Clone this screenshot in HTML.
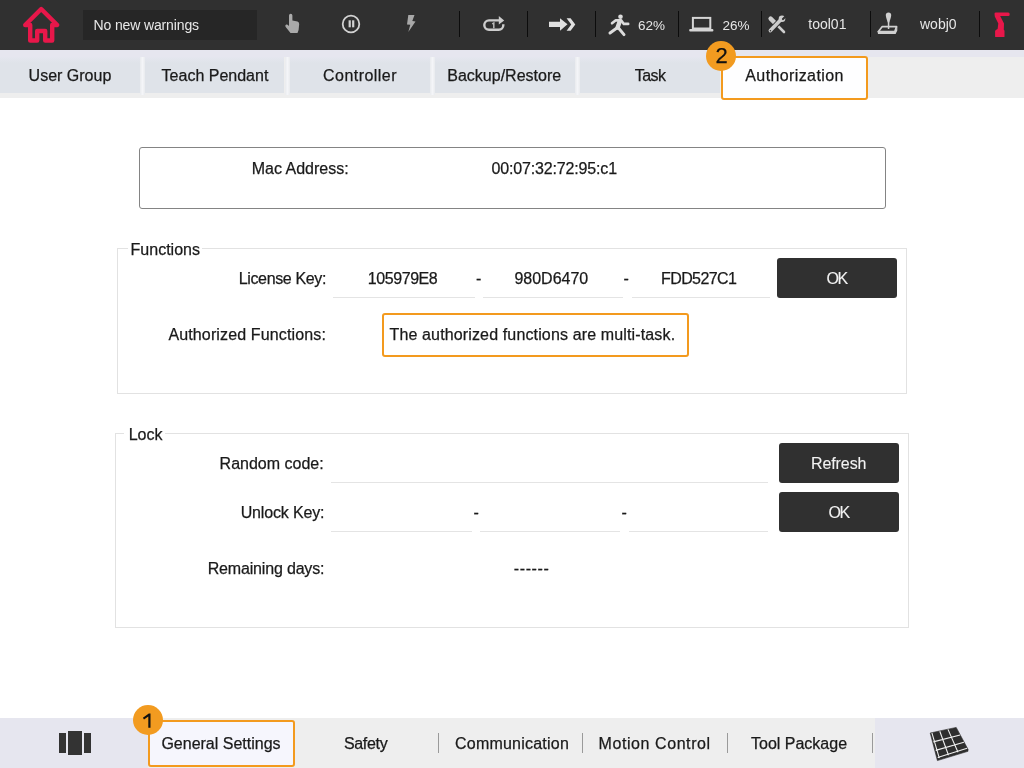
<!DOCTYPE html>
<html><head><meta charset="utf-8">
<style>
*{margin:0;padding:0;box-sizing:border-box}
html,body{width:1024px;height:768px;overflow:hidden;background:#fff;font-family:"Liberation Sans",sans-serif;color:#1a1a1a}
body{will-change:transform}
.a{position:absolute}
.t{position:absolute;line-height:1;white-space:nowrap;font-size:16px;-webkit-text-stroke:0.25px currentColor}
#top{left:0;top:0;width:1024px;height:50px;background:#303030}
.sep{position:absolute;top:11.3px;width:1.5px;height:26px;background:#0c0c0c}
.wt{color:#e6e6e6;-webkit-text-stroke:0}
#tabs{left:0;top:50px;width:1024px;height:48px;background:#eeeeee}
#tabs .band{position:absolute;left:0;top:0;width:1024px;height:7px;background:#e6e6ef}
.tab{position:absolute;top:7px;height:36px;width:140px;background:linear-gradient(#e5e6ef,#dfe3e9 6px)}
.tabsep{position:absolute;top:7px;height:38px;width:5px;background:linear-gradient(90deg,#e9ebee,#f4f5f8 50%,#e9ebee)}
.box{position:absolute;border:1px solid #848484;border-radius:3px}
.grp{position:absolute;border:1px solid #e2e2e2}
.line{position:absolute;height:1px;background:#e4e4e4}
.btn{position:absolute;background:#303030;border-radius:3px}
.bt{color:#f2f2f2;-webkit-text-stroke:0.1px currentColor}
.orange{position:absolute;border:2px solid #f39a1e;border-radius:3px}
.badge{position:absolute;width:30px;height:30px;border-radius:50%;background:#f29b20}
#bot{left:0;top:718px;width:1024px;height:50px;background:#eeeeee}
.bsep{position:absolute;top:733px;width:1px;height:20px;background:#9a9a9a}
</style></head><body>

<!-- TOP BAR -->
<div id="top" class="a"></div>
<svg class="a" style="left:0;top:0" width="1024" height="50" viewBox="0 0 1024 50">
  <!-- home -->
  <path d="M25.2 25 L41.2 9 L57.2 25 L52.2 25 L52.2 40.5 L45.2 40.5 L45.2 31 L37.2 31 L37.2 40.5 L30.2 40.5 L30.2 25 Z" fill="none" stroke="#e8174a" stroke-width="4.4" stroke-linejoin="round"/>
  <!-- warning box -->
  <rect x="83" y="10" width="174" height="30" fill="#262626"/>
  <!-- hand -->
  <path d="M289 15.5 a1.7 1.7 0 0 1 3.4 0 V20.5 L297.5 21.5 Q299.3 22 299.2 24 L298.6 30 L297.5 33 H290.5 L285.5 26.8 Q284.8 25 286.3 24.6 Q287.3 24.4 289 26 Z" fill="#aaaaaa"/>
  <!-- pause -->
  <circle cx="351" cy="24" r="8.3" fill="none" stroke="#d2d2d2" stroke-width="1.8"/>
  <rect x="348.6" y="20.3" width="2.2" height="7" fill="#d2d2d2"/>
  <rect x="352.1" y="20.3" width="2.2" height="7" fill="#d2d2d2"/>
  <!-- lightning -->
  <path d="M408.3 15 L414.5 15 L412.3 21 L415.5 21.5 L408.3 32 L410.3 24.8 L407 24.5 Z" fill="#a8a8a8"/>
  <!-- repeat one -->
  <path d="M500 20.4 H489 A4.7 4.7 0 0 0 489 29.8 H498.8 A4.6 4.6 0 0 0 503.3 25.3 V24.2" fill="none" stroke="#cdcdcd" stroke-width="2.4"/>
  <path d="M498.8 16 L504.2 20.6 L498.8 24.4 Z" fill="#cdcdcd"/>
  <path d="M492.2 23.9 L493.8 23 V28.2" fill="none" stroke="#bcbcbc" stroke-width="1.5"/>
  <!-- double arrow -->
  <path d="M549 21.7 H560 V18.2 L567.5 24.3 L560 30.8 V27 H549 Z" fill="#e0e0e0"/>
  <path d="M566.6 18.2 L570.6 18.2 L575.3 24.4 L570.6 30.8 L566.6 30.8 L571.2 24.4 Z" fill="#e0e0e0"/>
  <!-- walker -->
  <circle cx="620.5" cy="16.8" r="2.3" fill="#dcdcdc"/>
  <g fill="none" stroke="#dcdcdc" stroke-linecap="round" stroke-linejoin="round">
  <path d="M612 23.3 L615.8 20.2 L621.3 20.4 L623.8 23.9 L628.2 23.9" stroke-width="2.6"/>
  <path d="M619.8 21.3 L617.6 27.6" stroke-width="4.4"/>
  <path d="M617.2 27.8 L610 33" stroke-width="3"/>
  <path d="M618.3 27.8 L624 34.6" stroke-width="3"/></g>
  <!-- laptop -->
  <rect x="692.9" y="17.9" width="17.4" height="10.6" fill="none" stroke="#d5d5d5" stroke-width="2"/>
  <rect x="689.2" y="29" width="24.2" height="2.4" rx="1" fill="#d5d5d5"/>
  <!-- tools -->
  <path d="M770.6 18.6 L774.6 22.6" stroke="#cdcdcd" stroke-width="4.4" stroke-linecap="round"/>
  <path d="M775 23 L784 32" stroke="#cdcdcd" stroke-width="2.6" stroke-linecap="round"/>
  <path d="M781 19.6 L770.4 30.6" stroke="#303030" stroke-width="5.4" stroke-linecap="round"/>
  <circle cx="782" cy="18.7" r="4.3" fill="#303030"/>
  <path d="M781 19.6 L770.4 30.6" stroke="#cdcdcd" stroke-width="3.6" stroke-linecap="round"/>
  <circle cx="782" cy="18.7" r="3.3" fill="#cdcdcd"/>
  <path d="M783 19 L786.5 15.5" stroke="#303030" stroke-width="2.2" stroke-linecap="round"/>
  <circle cx="770.4" cy="30.7" r="0.8" fill="#303030"/>
  <!-- joystick -->
  <path d="M885.8 15 Q885.8 12.4 888.5 12.4 Q891.2 12.4 891.2 15 Q891.2 17 889.2 22.5 H887.8 Q885.8 17 885.8 15 Z" fill="#d0d0d0"/>
  <rect x="887.8" y="21" width="1.5" height="8" fill="#d0d0d0"/>
  <path d="M882.3 26.6 L896.6 26.6 L894.8 31.6 L878.4 31.6 Z" fill="none" stroke="#d0d0d0" stroke-width="1.7" stroke-linejoin="round"/>
  <path d="M877.5 31 L895.5 31 L897.3 27 L897.3 30.5 L895.6 34 L878 34 Z" fill="#d0d0d0"/>
  <!-- robot arm -->
  <path d="M994.5 13.8 Q994.5 12.4 995.9 12.4 L1008.3 12.4 Q1009.7 12.4 1009.7 14.25 Q1009.7 16.1 1008.3 16.1 L1000.2 16.1 L1004 23.6 L1003.8 29.8 Q1004.5 30.2 1004.5 31 L1004.5 36.4 Q1004.5 37.1 1003.8 37.1 L995.8 37.1 Q995.1 37.1 995.1 36.4 L995.1 31 Q995.3 29.6 997.6 28.9 L998.3 23.4 L994.8 16.6 Z" fill="#e8174a"/>
</svg>
<div class="t wt" style="left:93.5px;top:18px;font-size:14px;color:#e8e8e8;letter-spacing:-0.13px">No new warnings</div>
<div class="sep" style="left:458.8px"></div>
<div class="sep" style="left:526.6px"></div>
<div class="sep" style="left:594.7px"></div>
<div class="sep" style="left:677.8px"></div>
<div class="sep" style="left:760.8px"></div>
<div class="sep" style="left:869.7px"></div>
<div class="sep" style="left:978.9px"></div>
<div class="t wt" style="left:638px;top:18.6px;font-size:13.5px">62%</div>
<div class="t wt" style="left:722.6px;top:18.6px;font-size:13.5px">26%</div>
<div class="t wt" style="left:808.3px;top:17.2px;font-size:14px">tool01</div>
<div class="t wt" style="left:920px;top:17.2px;font-size:14px">wobj0</div>

<!-- TABS -->
<div id="tabs" class="a"><div class="band"></div>
  <div class="tab" style="left:0"></div>
  <div class="tab" style="left:145px;width:139px"></div>
  <div class="tab" style="left:290px"></div>
  <div class="tab" style="left:435px"></div>
  <div class="tab" style="left:580px"></div>
  <div class="tabsep" style="left:140px"></div>
  <div class="tabsep" style="left:284.5px"></div>
  <div class="tabsep" style="left:430px"></div>
  <div class="tabsep" style="left:575px"></div>
</div>
<div class="t" style="left:28.6px;top:68.2px">User Group</div>
<div class="t" style="left:161.6px;top:68.2px">Teach Pendant</div>
<div class="t" style="left:323.1px;top:68.2px;letter-spacing:0.45px">Controller</div>
<div class="t" style="left:447.3px;top:68.2px">Backup/Restore</div>
<div class="t" style="left:634.7px;top:68.2px;letter-spacing:-0.5px">Task</div>
<div class="orange" style="left:721px;top:56px;width:147px;height:44px;background:#fefeff"></div>
<div class="t" style="left:745.3px;top:68.2px;letter-spacing:0.39px">Authorization</div>
<div class="badge" style="left:706px;top:41px"></div>
<div class="t" style="left:715.5px;top:45px;font-size:22px;color:#111">2</div>

<!-- MAC -->
<div class="box" style="left:139px;top:147px;width:747px;height:62px"></div>
<div class="t" style="left:251.7px;top:161.2px">Mac Address:</div>
<div class="t" style="left:491.4px;top:161.2px;letter-spacing:-0.15px">00:07:32:72:95:c1</div>

<!-- FUNCTIONS -->
<div class="grp" style="left:117px;top:248px;width:790px;height:146px"></div>
<div class="a" style="left:128px;top:240px;width:74px;height:14px;background:#fff"></div>
<div class="t" style="left:130.6px;top:242.2px">Functions</div>
<div class="t" style="left:238.7px;top:270.5px;letter-spacing:-0.35px">License Key:</div>
<div class="line" style="left:333px;top:297px;width:142px"></div>
<div class="line" style="left:482.5px;top:297px;width:140px"></div>
<div class="line" style="left:632px;top:297px;width:138px"></div>
<div class="t" style="left:367.8px;top:270.5px;letter-spacing:-0.43px">105979E8</div>
<div class="t" style="left:476px;top:270.5px">-</div>
<div class="t" style="left:514.4px;top:270.5px">980D6470</div>
<div class="t" style="left:623.5px;top:270.5px">-</div>
<div class="t" style="left:661px;top:270.5px;letter-spacing:-0.6px">FDD527C1</div>
<div class="btn" style="left:777px;top:258px;width:120px;height:40px"></div>
<div class="t bt" style="left:826.5px;top:270.5px;letter-spacing:-1.4px">OK</div>
<div class="t" style="left:168.4px;top:327.2px;letter-spacing:0.14px">Authorized Functions:</div>
<div class="orange" style="left:382px;top:313px;width:307px;height:44px"></div>
<div class="t" style="left:389.5px;top:327.2px;letter-spacing:0.14px">The authorized functions are multi-task.</div>

<!-- LOCK -->
<div class="grp" style="left:115px;top:433px;width:794px;height:195px"></div>
<div class="a" style="left:124px;top:425px;width:41px;height:14px;background:#fff"></div>
<div class="t" style="left:128.7px;top:426.5px">Lock</div>
<div class="t" style="left:219.6px;top:455.5px">Random code:</div>
<div class="line" style="left:331px;top:482px;width:437px"></div>
<div class="btn" style="left:779px;top:443px;width:120px;height:40px"></div>
<div class="t bt" style="left:811px;top:455.5px;letter-spacing:-0.1px">Refresh</div>
<div class="t" style="left:240.7px;top:504.7px;letter-spacing:-0.16px">Unlock Key:</div>
<div class="line" style="left:331px;top:531px;width:141px"></div>
<div class="line" style="left:480px;top:531px;width:140px"></div>
<div class="line" style="left:629px;top:531px;width:139px"></div>
<div class="t" style="left:473.5px;top:504.7px">-</div>
<div class="t" style="left:621.5px;top:504.7px">-</div>
<div class="btn" style="left:779px;top:492px;width:120px;height:40px"></div>
<div class="t bt" style="left:828.5px;top:505.3px;letter-spacing:-1.4px">OK</div>
<div class="t" style="left:207.7px;top:560.5px;letter-spacing:-0.17px">Remaining days:</div>
<div class="t" style="left:513.8px;top:560.5px;letter-spacing:0.6px">------</div>

<!-- BOTTOM -->
<div id="bot" class="a"></div>
<div class="a" style="left:0;top:718px;width:148px;height:50px;background:#e6e6ef"></div>
<div class="a" style="left:875px;top:718px;width:149px;height:50px;background:#e6e6ef"></div>
<div class="a" style="left:59px;top:733px;width:7px;height:20px;background:#333"></div>
<div class="a" style="left:68.3px;top:730.5px;width:13.3px;height:24.5px;background:#333"></div>
<div class="a" style="left:84.4px;top:733px;width:6.6px;height:20px;background:#333"></div>
<div class="orange" style="left:148px;top:720px;width:147px;height:47px;background:#f6f6fd"></div>
<div class="t" style="left:161.4px;top:736.1px">General Settings</div>
<div class="badge" style="left:133px;top:705px"></div>
<svg class="a" style="left:130px;top:700px" width="40" height="40" viewBox="130 700 40 40"><path d="M150.5 713.6 V727.7 H148.3 V716.6 L144 719.6 L142.9 717.8 L148.8 713.6 Z" fill="#111"/></svg>
<div class="t" style="left:343.9px;top:735.5px;letter-spacing:-0.3px">Safety</div>
<div class="bsep" style="left:438px"></div>
<div class="t" style="left:455px;top:735.5px;letter-spacing:0.22px">Communication</div>
<div class="bsep" style="left:582px"></div>
<div class="t" style="left:598.6px;top:735.5px;letter-spacing:0.57px">Motion Control</div>
<div class="bsep" style="left:727px"></div>
<div class="t" style="left:751px;top:735.5px">Tool Package</div>
<div class="bsep" style="left:872px"></div>
<svg class="a" style="left:920px;top:718px" width="60" height="50" viewBox="920 718 60 50">
  <path d="M930.2 733 L956.2 727.4 L968 749.3 L968 751.3 L937.4 760.6 Z" fill="#2e2e2e" stroke="#2e2e2e" stroke-width="0.6" stroke-linejoin="round"/>
  <path d="M931.9 732.9 L939.3 758.2 M939.8 731.2 L948.5 755.3 M948.0 729.4 L958.0 752.2 M933.3 741.9 L960.1 735.0 M935.7 750.4 L963.9 742.2 M937.7 757.5 L967.1 748.2" stroke="#eeeeee" stroke-width="1.1" fill="none"/>
</svg>
</body></html>
